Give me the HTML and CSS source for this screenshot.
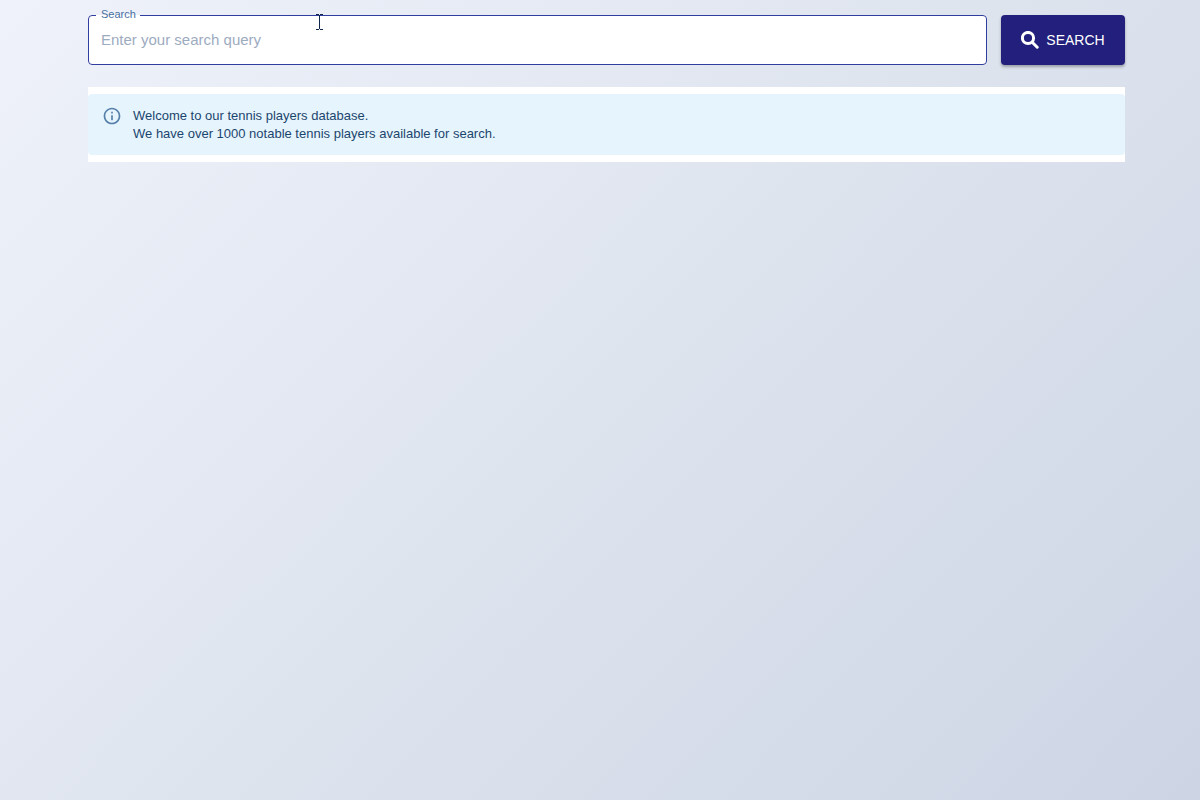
FILE: index.html
```html
<!DOCTYPE html>
<html lang="en">
<head>
    <meta charset="UTF-8">
    <meta name="viewport" content="width=device-width, initial-scale=1.0">
    <title>Tennis players</title>
    <link rel="stylesheet" href="styles.css">
</head>
<body>
    <main class="container">
        <form class="search-form">
            <fieldset class="field">
                <legend class="field-legend"><label for="query">Search</label></legend>
                <input class="field-input" id="query" type="text" placeholder="Enter your search query">
            </fieldset>
            <button class="search-button" type="submit">
                <svg class="search-icon" viewBox="0 0 18 18" aria-hidden="true">
                    <circle cx="7" cy="7" r="5.6" />
                    <path d="M11.2 11.2L16.2 16.2" />
                </svg>
                Search
            </button>
        </form>

        <section class="results">
            <div class="alert">
                <svg class="alert-icon" viewBox="0 0 24 24" aria-hidden="true">
                    <path d="M11 7h2v2h-2zm0 4h2v6h-2zm1-9C6.48 2 2 6.48 2 12s4.48 10 10 10 10-4.48 10-10S17.52 2 12 2zm0 18c-4.41 0-8-3.59-8-8s3.59-8 8-8 8 3.59 8 8-3.59 8-8 8z" />
                </svg>
                <p class="alert-text">Welcome to our tennis players database.<br>We have over 1000 notable tennis players available for search.</p>
            </div>
        </section>
    </main>

    <svg class="cursor" viewBox="0 0 7 16" aria-hidden="true">
        <path d="M0 0h3v1H0zM4 0h3v1H4zM3 1h1v14H3zM0 15h3v1H0zM4 15h3v1H4z" />
    </svg>
</body>
</html>
```

FILE: styles.css
```css
* {
    box-sizing: border-box;
}
body {
    margin: 0;
    min-height: 100vh;
    font-family: "Liberation Sans", Arial, sans-serif;
    background: linear-gradient(135deg, #eff2fb 0%, #dee4ee 50%, #cdd5e5 100%);
}
.container {
    padding: 8px 75px 0 88px;
}
.search-form {
    display: flex;
    align-items: flex-end;
    gap: 14px;
}
.field {
    flex: 1;
    min-width: 0;
    margin: 0;
    padding: 0 7px;
    border: 1px solid #303f9f;
    border-radius: 4px;
    background: #fff;
}
.field-legend {
    padding: 0 4px 2px 5px;
    font-size: 11px;
    line-height: 13px;
    color: #4a70a0;
}
.field-input {
    display: block;
    width: 100%;
    height: 41px;
    padding: 0 5px 8px;
    border: 0;
    outline: 0;
    background: transparent;
    font-family: inherit;
    font-size: 15px;
    color: #1e4976;
}
.field-input::placeholder {
    color: #9dabbf;
    opacity: 1;
}
.search-button {
    display: flex;
    align-items: center;
    justify-content: center;
    gap: 7px;
    width: 124px;
    height: 50px;
    padding: 0;
    border: 0;
    border-radius: 4px;
    background: #231f7c;
    box-shadow: 0 2px 3px rgba(0, 0, 0, 0.3);
    color: #fff;
    font-family: inherit;
    font-size: 14px;
    text-transform: uppercase;
    cursor: pointer;
}
.search-icon {
    width: 18px;
    height: 18px;
    fill: none;
    stroke: #fff;
    stroke-width: 3;
    stroke-linecap: round;
}
.results {
    margin-top: 22px;
    padding: 7px 0;
    background: #fff;
}
.alert {
    display: flex;
    gap: 11px;
    padding: 12px 14px;
    border-radius: 4px;
    background: #e6f5fd;
}
.alert-icon {
    width: 20px;
    height: 20px;
    fill: #557fa8;
}
.alert-text {
    margin: 0;
    padding-top: 1px;
    font-size: 13px;
    line-height: 18px;
    color: #1c456e;
}
/* text cursor lying over the search field */
.cursor {
    position: absolute;
    top: 14px;
    left: 316px;
    width: 7px;
    height: 16px;
    fill: #10264a;
    pointer-events: none;
}
```
